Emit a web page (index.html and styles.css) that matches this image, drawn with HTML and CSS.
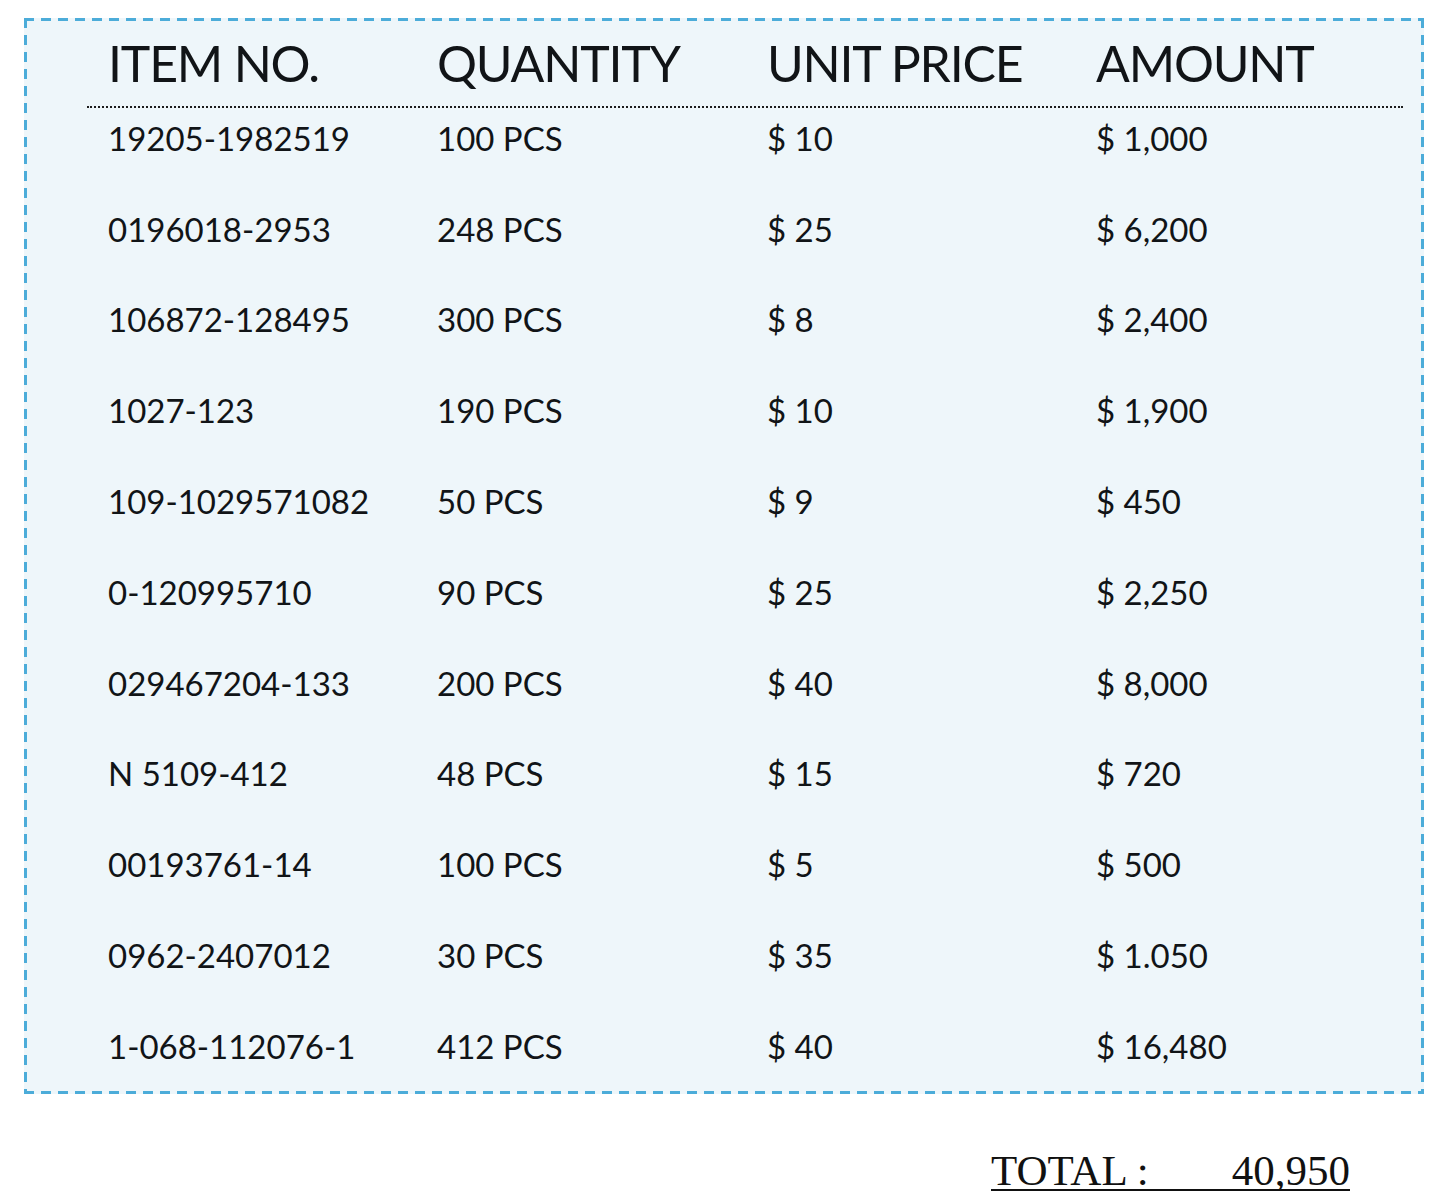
FILE: index.html
```html
<!DOCTYPE html>
<html>
<head>
<meta charset="utf-8">
<link rel="stylesheet" href="styles.css">
</head>
<body>
<div class="sheet">
  <div class="row head">
    <div>ITEM NO.</div><div>QUANTITY</div><div>UNIT PRICE</div><div>AMOUNT</div>
  </div>
  <div class="body">
    <div class="row"><div>19205-1982519</div><div>100 PCS</div><div>$ 10</div><div>$ 1,000</div></div>
    <div class="row"><div>0196018-2953</div><div>248 PCS</div><div>$ 25</div><div>$ 6,200</div></div>
    <div class="row"><div>106872-128495</div><div>300 PCS</div><div>$ 8</div><div>$ 2,400</div></div>
    <div class="row"><div>1027-123</div><div>190 PCS</div><div>$ 10</div><div>$ 1,900</div></div>
    <div class="row"><div>109-1029571082</div><div>50 PCS</div><div>$ 9</div><div>$ 450</div></div>
    <div class="row"><div>0-120995710</div><div>90 PCS</div><div>$ 25</div><div>$ 2,250</div></div>
    <div class="row"><div>029467204-133</div><div>200 PCS</div><div>$ 40</div><div>$ 8,000</div></div>
    <div class="row"><div>N 5109-412</div><div>48 PCS</div><div>$ 15</div><div>$ 720</div></div>
    <div class="row"><div>00193761-14</div><div>100 PCS</div><div>$ 5</div><div>$ 500</div></div>
    <div class="row"><div>0962-2407012</div><div>30 PCS</div><div>$ 35</div><div>$ 1.050</div></div>
    <div class="row"><div>1-068-112076-1</div><div>412 PCS</div><div>$ 40</div><div>$ 16,480</div></div>
  </div>
</div>
<div class="footer">
  <div class="total"><span class="label">TOTAL :</span><span class="value">40,950</span></div>
</div>
</body>
</html>
```
FILE: styles.css
```css
html, body {
  margin: 0;
  padding: 0;
  background: #ffffff;
}
body {
  color: #111417;
  font-family: Lato, "Open Sans", sans-serif;
}
.sheet {
  margin: 18px 0 0 24px;
  width: 1400px;
  height: 1076px;
  box-sizing: border-box;
  padding: 3px 21px 3px 63px;
  background-color: #eef6fa;
  background-image:
    repeating-linear-gradient(to right, #4cacd9 0 10px, transparent 10px 17px),
    repeating-linear-gradient(to right, #4cacd9 0 10px, transparent 10px 17px),
    repeating-linear-gradient(to bottom, #4cacd9 0 10px, transparent 10px 17px),
    repeating-linear-gradient(to bottom, #4cacd9 0 10px, transparent 10px 17px);
  background-size: 100% 3px, 100% 3px, 3px 100%, 3px 100%;
  background-position: left top, left bottom, left top, right top;
  background-repeat: no-repeat;
}
.row {
  display: grid;
  grid-template-columns: 329px 330px 329px 1fr;
}
.row > div {
  padding-left: 21px;
  white-space: nowrap;
}
.head {
  font-size: 50px;
  letter-spacing: -1.2px;
  line-height: 1.2;
  padding-top: 11.5px;
  padding-bottom: 13px;
  border-bottom: 2px dotted #1c1c1c;
}
.body {
  display: flex;
  flex-direction: column;
  gap: 51.2px;
  padding-top: 11.4px;
  font-size: 33px;
  line-height: 1.2;
}
.footer {
  display: flex;
  justify-content: flex-end;
  padding-right: 96px;
  margin-top: 59px;
}
.total {
  display: flex;
  justify-content: space-between;
  width: 359px;
  white-space: nowrap;
  font-family: "Liberation Serif", serif;
  font-size: 43px;
  line-height: 36px;
  color: #111;
  border-bottom: 2px solid #111;
}
```
